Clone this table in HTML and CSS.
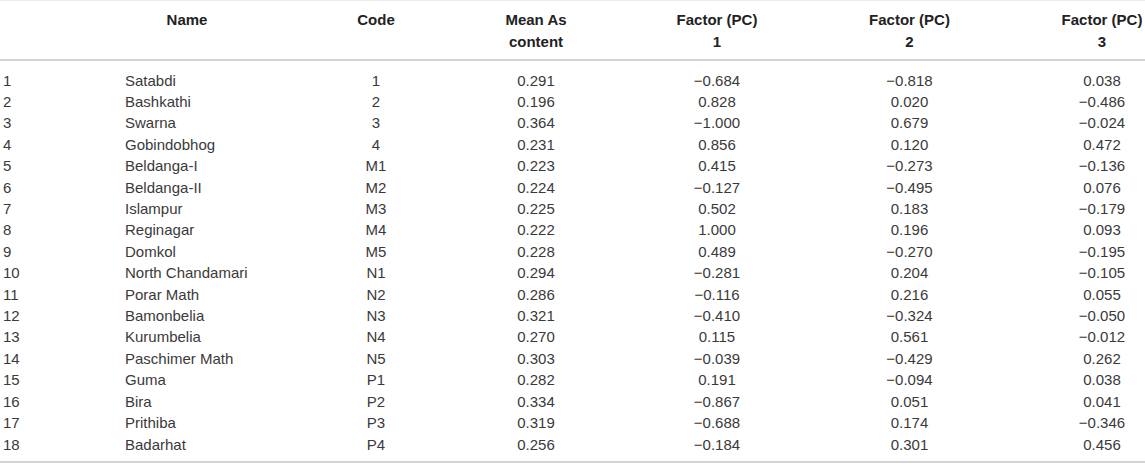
FILE: index.html
```html
<!DOCTYPE html>
<html lang="en">
<head>
<meta charset="utf-8">
<title>Table</title>
<link rel="stylesheet" href="styles.css">
</head>
<body>
<table class="data">
  <colgroup>
    <col class="w-idx"><col class="w-name"><col class="w-code"><col class="w-mean"><col class="w-f1"><col class="w-f2"><col class="w-f3">
  </colgroup>
  <thead>
    <tr>
      <th class="c-idx"></th>
      <th class="c-name">Name</th>
      <th class="c-code">Code</th>
      <th class="c-mean">Mean As<br>content</th>
      <th class="c-f1">Factor (PC)<br>1</th>
      <th class="c-f2">Factor (PC)<br>2</th>
      <th class="c-f3">Factor (PC)<br>3</th>
    </tr>
  </thead>
  <tbody>
    <tr><td class="c-idx">1</td><td class="c-name">Satabdi</td><td class="c-code">1</td><td class="c-mean">0.291</td><td class="c-f1">−0.684</td><td class="c-f2">−0.818</td><td class="c-f3">0.038</td></tr>
    <tr><td class="c-idx">2</td><td class="c-name">Bashkathi</td><td class="c-code">2</td><td class="c-mean">0.196</td><td class="c-f1">0.828</td><td class="c-f2">0.020</td><td class="c-f3">−0.486</td></tr>
    <tr><td class="c-idx">3</td><td class="c-name">Swarna</td><td class="c-code">3</td><td class="c-mean">0.364</td><td class="c-f1">−1.000</td><td class="c-f2">0.679</td><td class="c-f3">−0.024</td></tr>
    <tr><td class="c-idx">4</td><td class="c-name">Gobindobhog</td><td class="c-code">4</td><td class="c-mean">0.231</td><td class="c-f1">0.856</td><td class="c-f2">0.120</td><td class="c-f3">0.472</td></tr>
    <tr><td class="c-idx">5</td><td class="c-name">Beldanga-I</td><td class="c-code">M1</td><td class="c-mean">0.223</td><td class="c-f1">0.415</td><td class="c-f2">−0.273</td><td class="c-f3">−0.136</td></tr>
    <tr><td class="c-idx">6</td><td class="c-name">Beldanga-II</td><td class="c-code">M2</td><td class="c-mean">0.224</td><td class="c-f1">−0.127</td><td class="c-f2">−0.495</td><td class="c-f3">0.076</td></tr>
    <tr><td class="c-idx">7</td><td class="c-name">Islampur</td><td class="c-code">M3</td><td class="c-mean">0.225</td><td class="c-f1">0.502</td><td class="c-f2">0.183</td><td class="c-f3">−0.179</td></tr>
    <tr><td class="c-idx">8</td><td class="c-name">Reginagar</td><td class="c-code">M4</td><td class="c-mean">0.222</td><td class="c-f1">1.000</td><td class="c-f2">0.196</td><td class="c-f3">0.093</td></tr>
    <tr><td class="c-idx">9</td><td class="c-name">Domkol</td><td class="c-code">M5</td><td class="c-mean">0.228</td><td class="c-f1">0.489</td><td class="c-f2">−0.270</td><td class="c-f3">−0.195</td></tr>
    <tr><td class="c-idx">10</td><td class="c-name">North Chandamari</td><td class="c-code">N1</td><td class="c-mean">0.294</td><td class="c-f1">−0.281</td><td class="c-f2">0.204</td><td class="c-f3">−0.105</td></tr>
    <tr><td class="c-idx">11</td><td class="c-name">Porar Math</td><td class="c-code">N2</td><td class="c-mean">0.286</td><td class="c-f1">−0.116</td><td class="c-f2">0.216</td><td class="c-f3">0.055</td></tr>
    <tr><td class="c-idx">12</td><td class="c-name">Bamonbelia</td><td class="c-code">N3</td><td class="c-mean">0.321</td><td class="c-f1">−0.410</td><td class="c-f2">−0.324</td><td class="c-f3">−0.050</td></tr>
    <tr><td class="c-idx">13</td><td class="c-name">Kurumbelia</td><td class="c-code">N4</td><td class="c-mean">0.270</td><td class="c-f1">0.115</td><td class="c-f2">0.561</td><td class="c-f3">−0.012</td></tr>
    <tr><td class="c-idx">14</td><td class="c-name">Paschimer Math</td><td class="c-code">N5</td><td class="c-mean">0.303</td><td class="c-f1">−0.039</td><td class="c-f2">−0.429</td><td class="c-f3">0.262</td></tr>
    <tr><td class="c-idx">15</td><td class="c-name">Guma</td><td class="c-code">P1</td><td class="c-mean">0.282</td><td class="c-f1">0.191</td><td class="c-f2">−0.094</td><td class="c-f3">0.038</td></tr>
    <tr><td class="c-idx">16</td><td class="c-name">Bira</td><td class="c-code">P2</td><td class="c-mean">0.334</td><td class="c-f1">−0.867</td><td class="c-f2">0.051</td><td class="c-f3">0.041</td></tr>
    <tr><td class="c-idx">17</td><td class="c-name">Prithiba</td><td class="c-code">P3</td><td class="c-mean">0.319</td><td class="c-f1">−0.688</td><td class="c-f2">0.174</td><td class="c-f3">−0.346</td></tr>
    <tr><td class="c-idx">18</td><td class="c-name">Badarhat</td><td class="c-code">P4</td><td class="c-mean">0.256</td><td class="c-f1">−0.184</td><td class="c-f2">0.301</td><td class="c-f3">0.456</td></tr>
  </tbody>
</table>
</body>
</html>
```

FILE: styles.css
```css
html, body {
  margin: 0;
  padding: 0;
  background: #ffffff;
}

.data {
  width: 1145px;
  table-layout: fixed;
  border-collapse: collapse;
  font-family: "Liberation Sans", Arial, Helvetica, sans-serif;
  font-size: 15px;
  color: #3a3a3a;
  border-top: 1px solid #ececec;
}

.w-idx { width: 125px; }
.w-name { width: 156px; }
.w-code { width: 175px; }
.w-mean { width: 170px; }
.w-f1 { width: 187px; }
.w-f2 { width: 193px; }
.w-f3 { width: 139px; }

.data th,
.data td {
  padding: 0;
  text-align: center;
  white-space: nowrap;
}

.data thead th {
  font-weight: bold;
  color: #222222;
  line-height: 22px;
  padding-top: 8px;
  padding-bottom: 6px;
  border-bottom: 2px solid #d4d4d4;
  vertical-align: top;
}

.data tbody td {
  line-height: 21.4px;
}

.data tbody tr:first-child td {
  padding-top: 8.6px;
}

.data tbody tr:last-child td {
  padding-bottom: 6px;
  border-bottom: 2px solid #d4d4d4;
}

.data .c-idx {
  text-align: left;
  padding-left: 3px;
}

.data td.c-name {
  text-align: left;
}

.data th.c-name {
  padding-right: 32px;
}

.data .c-code {
  padding-left: 15px;
}

.data .c-mean {
  padding-right: 10px;
}

.data .c-f1 {
  padding-right: 5px;
}

.data .c-f3 {
  padding-left: 53px;
}
```
